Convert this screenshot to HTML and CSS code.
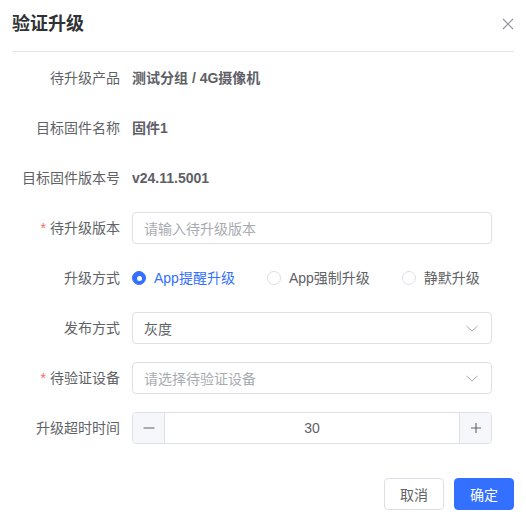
FILE: index.html
```html
<!DOCTYPE html>
<html lang="zh-CN">
<head>
<meta charset="utf-8">
<title>验证升级</title>
<link rel="stylesheet" href="styles.css">
</head>
<body>
<div class="dialog">
  <div class="header">
    <span class="title">验证升级</span>
    <svg class="close" width="12" height="12" viewBox="0 0 12 12"><path d="M1 1L11 11M11 1L1 11" stroke="#909399" stroke-width="1.2" fill="none"/></svg>
  </div>
  <div class="form">
    <div class="row">
      <div class="label">待升级产品</div>
      <div class="value">测试分组 / 4G摄像机</div>
    </div>
    <div class="row">
      <div class="label">目标固件名称</div>
      <div class="value">固件1</div>
    </div>
    <div class="row">
      <div class="label">目标固件版本号</div>
      <div class="value">v24.11.5001</div>
    </div>
    <div class="row">
      <div class="label"><span class="req">*</span>待升级版本</div>
      <div class="control input"><span class="placeholder">请输入待升级版本</span></div>
    </div>
    <div class="row">
      <div class="label">升级方式</div>
      <div class="radios">
        <span class="radio checked"><span class="dot"></span><span class="rtext">App提醒升级</span></span>
        <span class="radio"><span class="dot"></span><span class="rtext">App强制升级</span></span>
        <span class="radio"><span class="dot"></span><span class="rtext">静默升级</span></span>
      </div>
    </div>
    <div class="row">
      <div class="label">发布方式</div>
      <div class="control input select"><span class="text">灰度</span>
        <svg class="arrow" width="14" height="14" viewBox="0 0 14 14"><path d="M1.5 5L7 10L12.5 5" stroke="#a8abb2" stroke-width="1" fill="none"/></svg>
      </div>
    </div>
    <div class="row">
      <div class="label"><span class="req">*</span>待验证设备</div>
      <div class="control input select"><span class="placeholder">请选择待验证设备</span>
        <svg class="arrow" width="14" height="14" viewBox="0 0 14 14"><path d="M1.5 5L7 10L12.5 5" stroke="#a8abb2" stroke-width="1" fill="none"/></svg>
      </div>
    </div>
    <div class="row">
      <div class="label">升级超时时间</div>
      <div class="control number">
        <span class="step minus"><svg width="12" height="12" viewBox="0 0 12 12"><path d="M0.5 6H11.5" stroke="#606266" stroke-width="1.1"/></svg></span>
        <span class="num">30</span>
        <span class="step plus"><svg width="12" height="12" viewBox="0 0 12 12"><path d="M1 6H11M6 1V11" stroke="#606266" stroke-width="1.1"/></svg></span>
      </div>
    </div>
  </div>
  <div class="footer">
    <button class="btn">取消</button>
    <button class="btn primary">确定</button>
  </div>
</div>
</body>
</html>
```
FILE: styles.css
```css
* { box-sizing: border-box; }
html, body { margin: 0; padding: 0; background: #fff; }
body {
  font-family: "Liberation Sans", "Noto Sans CJK SC", sans-serif;
  font-size: 14px;
  color: #606266;
}
.dialog { width: 526px; height: 523px; }
.header {
  margin: 0 12px;
  height: 52px;
  border-bottom: 1px solid #e4e7ed;
  display: flex;
  justify-content: space-between;
  align-items: flex-start;
  padding-top: 12px;
}
.title {
  font-size: 18px;
  line-height: 24px;
  font-weight: 700;
  color: #303133;
}
.close { margin-top: 6px; }
.form { padding: 10px 34px 0 12px; }
.row {
  display: flex;
  align-items: center;
  height: 32px;
  margin-bottom: 18px;
}
.label {
  width: 120px;
  flex: none;
  padding-right: 12px;
  text-align: right;
  line-height: 32px;
  color: #606266;
  white-space: nowrap;
}
.req { color: #f56c6c; margin-right: 4px; }
.value { font-weight: 700; color: #5e6066; line-height: 32px; }
.control {
  flex: 1;
  height: 32px;
  border: 1px solid #dcdfe6;
  border-radius: 4px;
}
.input {
  display: flex;
  align-items: center;
  padding: 0 11px;
}
.placeholder { color: #a8abb2; }
.text { color: #606266; }
.select { justify-content: space-between; }
.arrow { margin-right: 1px; }
.radios { display: flex; align-items: center; height: 32px; }
.radio { display: flex; align-items: center; margin-right: 32px; color: #606266; }
.radio:last-child { margin-right: 0; }
.dot {
  width: 14px; height: 14px;
  border: 1px solid #dcdfe6;
  border-radius: 50%;
  background: #fff;
  position: relative;
}
.radio.checked .dot { background: #3370ff; border-color: #3370ff; }
.radio.checked .dot::after {
  content: "";
  position: absolute;
  left: 50%; top: 50%;
  width: 5px; height: 5px;
  margin: -2.5px 0 0 -2.5px;
  border-radius: 50%;
  background: #fff;
}
.rtext { padding-left: 8px; line-height: 20px; }
.radio.checked .rtext { color: #3370ff; }
.number { display: flex; align-items: stretch; overflow: hidden; }
.step {
  width: 32px;
  flex: none;
  background: #f5f7fa;
  display: flex;
  align-items: center;
  justify-content: center;
}
.minus { border-right: 1px solid #dcdfe6; }
.plus { border-left: 1px solid #dcdfe6; }
.num { flex: 1; text-align: center; line-height: 30px; color: #606266; }
.footer {
  display: flex;
  justify-content: flex-end;
  gap: 10px;
  padding: 16px 12px 0 0;
}
.btn {
  font-family: inherit;
  font-size: 14px;
  height: 32px;
  width: 60px;
  padding: 0;
  border: 1px solid #dcdfe6;
  border-radius: 4px;
  background: #fff;
  color: #606266;
}
.btn.primary { background: #3370ff; border-color: #3370ff; color: #fff; }
```
